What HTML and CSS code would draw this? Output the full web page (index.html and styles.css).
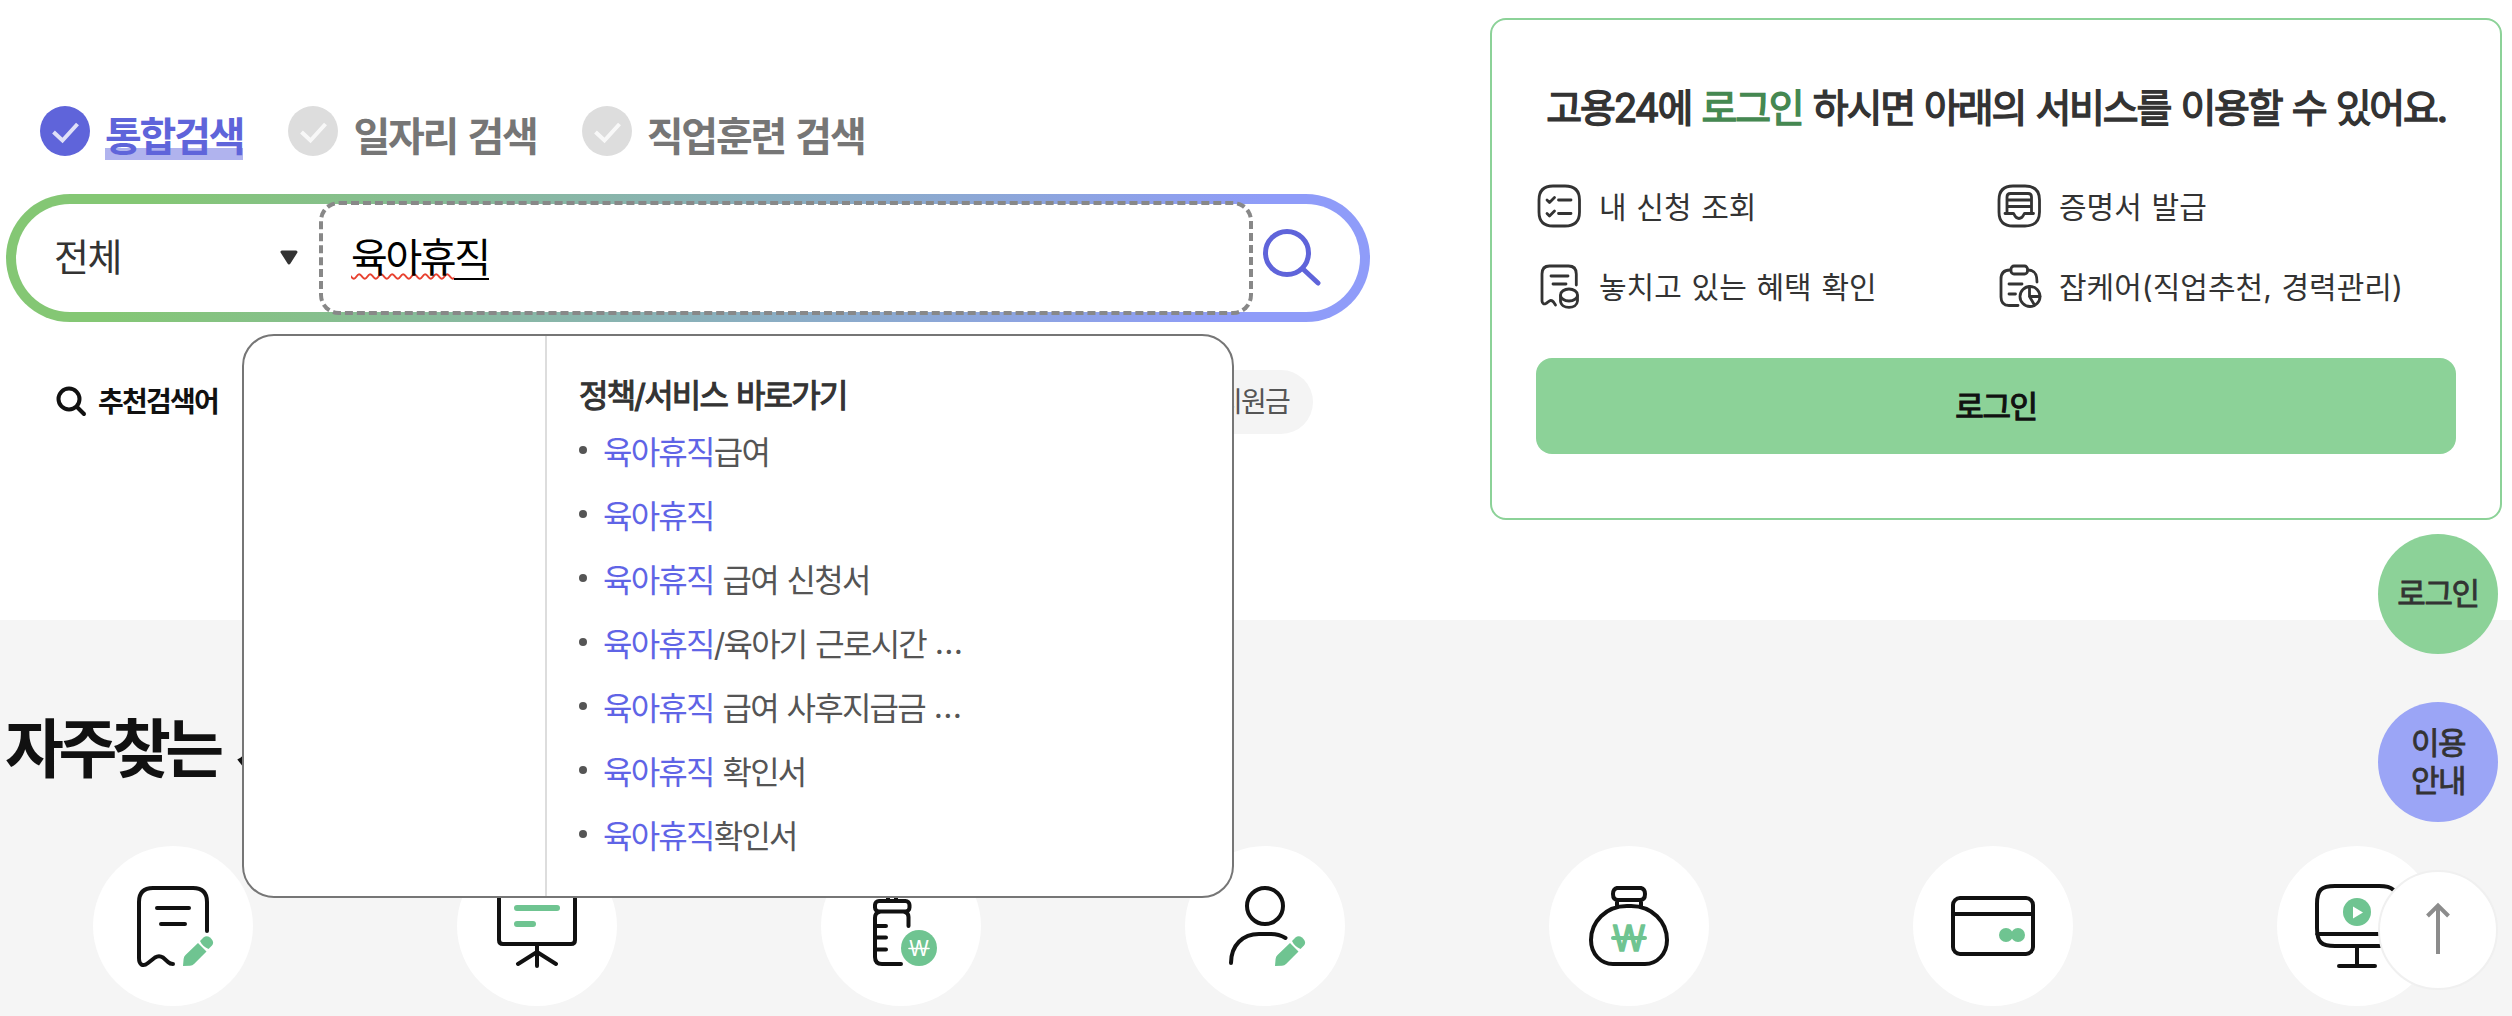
FILE: index.html
```
<!DOCTYPE html>
<html lang="ko">

<head>
    <meta charset="UTF-8">
    <meta name="viewport" content="width=device-width, initial-scale=1.0">
    <title>고용24</title>
    <link rel="stylesheet" href="styles.css">
</head>

<body>
    <!-- shared icon parts -->
    <svg class="defs" width="0" height="0">
        <symbol id="pencil" viewBox="0 0 160 160">
            <path d="M105 97L113.500 105.500L101 118Q99.500 119.600 97 119.700L90 120L90.600 113Q90.800 110.500 92.500 109Z" fill="#6fc491" />
            <path d="M107 95L110.500 91.500Q113.500 88.800 117 91.500L118.500 93Q121.500 96.500 119 99.500L115.500 103Q109.500 100.500 107 95Z" fill="#6fc491" />
        </symbol>
        <symbol id="check" viewBox="0 0 52 52">
            <circle cx="26" cy="26" r="25" fill="currentColor" />
            <path d="M14.500 27L23.500 35.500L38.500 19" fill="none" stroke="#fff" stroke-opacity=".8" stroke-width="4" />
        </symbol>
    </svg>

    <main>
        <section class="top">
            <div class="search">
                <ul class="tabs">
                    <li class="tab active"><svg class="tab-icon"><use href="#check" /></svg><span>통합검색</span></li>
                    <li class="tab"><svg class="tab-icon"><use href="#check" /></svg><span>일자리 검색</span></li>
                    <li class="tab"><svg class="tab-icon"><use href="#check" /></svg><span>직업훈련 검색</span></li>
                </ul>

                <div class="search-bar">
                    <div class="search-inner">
                        <div class="select">
                            <span>전체</span>
                            <svg width="20" height="16" viewBox="0 0 20 16"><path d="M3 2H17L10 13Z" fill="#333" stroke="#333" stroke-width="3" stroke-linejoin="round" /></svg>
                        </div>
                        <div class="input"><span class="typed">육아휴<span class="composing">직</span></span></div>
                        <svg class="search-btn" width="60" height="60" viewBox="0 0 60 60">
                            <g fill="none" stroke="#5f64da" stroke-width="5" stroke-linecap="round">
                                <circle cx="26" cy="25" r="21.500" />
                                <path d="M42 41L57 55" />
                            </g>
                        </svg>
                    </div>
                </div>

                <div class="recommend">
                    <svg width="32" height="32" viewBox="0 0 32 32">
                        <g fill="none" stroke="#111" stroke-width="4" stroke-linecap="round">
                            <circle cx="14" cy="13" r="10.500" />
                            <path d="M22 21L29 28" />
                        </g>
                    </svg>
                    <strong>추천검색어</strong>
                    <span class="chip">지원금</span>
                </div>

                <!-- autocomplete -->
                <div class="suggest">
                    <div class="suggest-left"></div>
                    <div class="suggest-right">
                        <h3>정책/서비스 바로가기</h3>
                        <ul>
                            <li><em>육아휴직</em>급여</li>
                            <li><em>육아휴직</em></li>
                            <li><em>육아휴직</em> 급여 신청서</li>
                            <li><em>육아휴직</em>/육아기 근로시간 <span class="dots">...</span></li>
                            <li><em>육아휴직</em> 급여 사후지급금 <span class="dots">...</span></li>
                            <li><em>육아휴직</em> 확인서</li>
                            <li><em>육아휴직</em>확인서</li>
                        </ul>
                    </div>
                </div>
            </div>

            <div class="login-card">
                <h2>고용24에 <b>로그인</b> 하시면 아래의 서비스를 이용할 수 있어요.</h2>
                <ul class="services">
                    <li>
                        <svg class="line-icon" viewBox="0 0 46 46">
                            <path d="M16 3H28Q42.500 3 42.500 17V29Q42.500 43 28 43H16Q2 43 2 29V17Q2 3 16 3Z" />
                            <path d="M21.500 17H34M21.500 30.500H34M10 17L12.500 19.500L17.500 14.500M10 30.500L12.500 33L17.500 28" />
                        </svg>
                        <span>내 신청 조회</span>
                    </li>
                    <li>
                        <svg class="line-icon" viewBox="0 0 46 46">
                            <path d="M16 3H28Q42.500 3 42.500 17V29Q42.500 43 28 43H16Q2 43 2 29V17Q2 3 16 3Z" />
                            <path d="M10 30V14Q10 10.500 13.500 10.500H31Q34.500 10.500 34.500 14V30M10 17H34M10 23.500H34M8 30.500H16.500C17.500 30.500 17.500 35.500 22 35.500S26.500 30.500 27.500 30.500H36.500" />
                        </svg>
                        <span>증명서 발급</span>
                    </li>
                    <li>
                        <svg class="line-icon" viewBox="0 0 46 46">
                            <path d="M39.300 22V11Q39.300 3 31.500 3H12.500Q5 3 5 11V38Q5.500 42 9 40.500C12 38 14 36 16.500 39L18.500 42M14 13H31M16 21H29" />
                            <ellipse cx="32" cy="32" rx="8.500" ry="6" />
                            <path d="M23.500 33V38C24 46.500 40 46.500 40.500 38V33" />
                        </svg>
                        <span>놓치고 있는 혜택 확인</span>
                    </li>
                    <li>
                        <svg class="line-icon" viewBox="0 0 46 46">
                            <path d="M13 7C6.500 7 4 10 4 16V34C4 40 7.500 42.500 12 42.500H21M31 7C37 7 40 10 40 19M12 21H25M12 31H18.500" />
                            <rect x="14" y="3" width="16.500" height="8" rx="3" />
                            <circle cx="33" cy="33.500" r="10" />
                            <path d="M32.500 23.500V33.500H43M32.500 33.500L37.500 42" />
                        </svg>
                        <span>잡케어(직업추천, 경력관리)</span>
                    </li>
                </ul>
                <button class="login-btn">로그인</button>
            </div>
        </section>

        <section class="frequent">
            <h2>자주찾는 서비스</h2>
            <ul class="quick">
                <li>
                    <svg viewBox="0 0 160 160">
                        <path class="line" d="M114 85V56Q114 42 100 42H60Q46 42 46 56V112C46 119 50 121 55 117L62 111.500Q66 109 70 111.500L75 116Q77 118 80 118M64 62H96M68 78H92" />
                        <use href="#pencil" />
                    </svg>
                </li>
                <li>
                    <svg viewBox="0 0 160 160">
                        <path class="line" d="M42 42H118V94Q118 98 114 98H46Q42 98 42 94ZM80 98V120M61 118L80 106L99 118" />
                        <path d="M60 62H100M60 78H76" fill="none" stroke="#6fc491" stroke-width="6" stroke-linecap="round" />
                    </svg>
                </li>
                <li>
                    <svg viewBox="0 0 160 160">
                        <rect class="line" x="54" y="55" width="34.500" height="10.500" rx="4" />
                        <path class="line" d="M67 44V53M75 44V53M87.500 80V71Q87.500 67 84 66M58 66Q54 67 54 72V111Q54 118 61 118H80M54 80H65M54 91.500H65M54 103.500H65" />
                        <circle cx="98" cy="102" r="18" fill="#6fc491" />
                        <text class="won won-small" x="98" y="110" textLength="20" lengthAdjust="spacingAndGlyphs">W</text>
                        <path d="M88 102.500H108" stroke="#fff" stroke-width="1.600" stroke-linecap="round" />
                    </svg>
                </li>
                <li>
                    <svg viewBox="0 0 160 160">
                        <circle class="line" cx="80" cy="60" r="18" />
                        <path class="line" d="M46 117C46 99 58 88 74 88H86Q94 88 100.500 92" />
                        <use href="#pencil" />
                    </svg>
                </li>
                <li>
                    <svg viewBox="0 0 160 160">
                        <path class="line" d="M68 42H92Q96 43 96 48Q96 54 91 54H69Q64 54 64 48Q64 43 68 42ZM68 55V60M92 55V60M80 60C104 59 118 77 118 94C118 108 108 118 96 118H64C52 118 42 108 42 94C42 77 56 59 80 60Z" />
                        <text class="won won-big" x="80" y="105" textLength="33" lengthAdjust="spacingAndGlyphs">W</text>
                        <path d="M64 92H96" stroke="#6fc491" stroke-width="4" stroke-linecap="round" />
                    </svg>
                </li>
                <li>
                    <svg viewBox="0 0 160 160">
                        <rect class="line" x="40" y="52" width="80" height="56" rx="7" />
                        <path class="line" d="M40 68H120" />
                        <g fill="#6fc491">
                            <circle cx="93" cy="89" r="7" />
                            <circle cx="105" cy="89" r="7" />
                        </g>
                    </svg>
                </li>
                <li>
                    <svg viewBox="0 0 160 160">
                        <path class="line" d="M58 40H102C116 40 120 44 120 58V82C120 96 116 100 102 100H58C44 100 40 96 40 82V58C40 44 44 40 58 40ZM40 88H120M80 100V120M62 120H98" />
                        <circle cx="80" cy="66" r="14" fill="#6fc491" />
                        <path d="M76 60.500L86 66.500L76 72.500Z" fill="#fff" />
                    </svg>
                </li>
            </ul>
        </section>
    </main>

    <aside class="floating">
        <a class="float-btn green">로그인</a>
        <a class="float-btn purple">이용<br>안내</a>
        <a class="float-btn up">
            <svg width="40" height="60" viewBox="0 0 40 60"><path d="M20 54V6M9.500 16L20 5.500L30.500 16" fill="none" stroke="#8c8c8c" stroke-width="4" /></svg>
        </a>
    </aside>
</body>

</html>
```
FILE: styles.css
```
* {
    box-sizing: border-box;
    margin: 0;
    padding: 0;
}

body {
    position: relative;
    height: 1016px;
    overflow: hidden;
    background: #fff;
    color: #333;
    font-family: "Inter", "Noto Sans CJK KR", sans-serif;
    font-size: 32px;
    letter-spacing: -0.055em;
    word-spacing: 1.5px;
}

ul {
    list-style: none;
}

.defs {
    position: absolute;
}

.top {
    display: flex;
    justify-content: space-between;
    height: 620px;
    padding: 18px 10px 0 6px;
}

/* search */
.search {
    position: relative;
    width: 1364px;
    padding-top: 87px;
}

.tabs {
    display: flex;
    gap: 44px;
    height: 89px;
    padding-left: 33px;
}

.tab {
    display: flex;
    align-items: flex-start;
    gap: 14px;
    color: #767676;
    font-size: 40px;
    font-weight: 700;
    line-height: 63px;
    letter-spacing: -2.2px;
    word-spacing: 3px;
}

.tab-icon {
    width: 52px;
    height: 52px;
    color: #ddd;
}

.tab span {
    height: 55px;
}

.active {
    color: #5f64da;
}

.active .tab-icon {
    color: #5f64da;
}

.active span {
    background: linear-gradient(#b0b3ee, #b0b3ee) 0 100% / 100% 12px no-repeat;
}

.search-bar {
    height: 128px;
    padding: 10px;
    border-radius: 64px;
    background: linear-gradient(110deg, #84c774 10%, #8f9cf9 90%);
}

.search-inner {
    display: flex;
    align-items: center;
    height: 108px;
    border-radius: 54px;
    background: #fff;
    font-size: 40px;
}

.select {
    display: flex;
    align-items: center;
    justify-content: space-between;
    width: 303px;
    padding: 0 20px 0 38px;
}

.select span {
    padding-bottom: 7px;
    font-size: 38px;
    letter-spacing: -1.5px;
}

/* focus ring sits over the bar */
.input {
    flex: none;
    width: 934px;
    height: 114px;
    padding-left: 28px;
    border: 4px dashed #888;
    border-radius: 20px;
    color: #000;
    line-height: 106px;
    letter-spacing: -2.4px;
}

.typed {
    text-decoration: underline wavy #e8412f 2px;
    text-decoration-skip-ink: none;
    text-underline-offset: 1px;
}

.composing {
    display: inline-block;
    height: 44px;
    border-bottom: 2px solid #000;
    line-height: 43px;
}

.search-btn {
    margin-left: 8px;
}

.recommend {
    display: flex;
    align-items: center;
    height: 64px;
    margin-top: 48px;
    padding: 0 57px 0 49px;
    font-size: 28px;
}

.recommend strong {
    margin-left: 11px;
    padding-bottom: 4px;
    color: #111;
    font-weight: 700;
}

.chip {
    margin-left: auto;
    padding: 0 24px;
    border-radius: 32px;
    background: #f4f4f4;
    color: #555;
    line-height: 64px;
}

.suggest {
    position: absolute;
    z-index: 2;
    top: 316px;
    left: 236px;
    display: flex;
    width: 992px;
    height: 564px;
    border: 2px solid #767676;
    border-radius: 32px;
    background: #fff;
}

.suggest-left {
    width: 303px;
    border-right: 2px solid #ddd;
}

.suggest-right {
    padding: 36px 32px;
}

.suggest h3 {
    font-size: 32px;
    font-weight: 400;
    line-height: 48px;
    -webkit-text-stroke: 1.1px;
}

.suggest li {
    display: flex;
    align-items: center;
    height: 64px;
    padding-bottom: 4px;
    color: #555;
    white-space: pre;
}

.suggest li::before {
    content: "";
    width: 8px;
    height: 8px;
    margin-right: 16px;
    border-radius: 50%;
    background: #555;
}

.suggest em {
    color: #5f64e6;
    font-style: normal;
}

.dots {
    letter-spacing: 0.3px;
}

/* login card */
.login-card {
    width: 1012px;
    height: 502px;
    padding: 60px 44px 0;
    border: 2px solid #8cd298;
    border-radius: 16px;
}

.login-card h2 {
    font-size: 39px;
    font-weight: 400;
    line-height: 56px;
    letter-spacing: -2.2px;
    text-align: center;
    white-space: nowrap;
    -webkit-text-stroke: 1.4px;
}

.login-card b {
    color: #458851;
    font-weight: 400;
}

.services {
    display: grid;
    grid-template-columns: 460px 460px;
    margin-top: 30px;
}

.services li {
    display: flex;
    align-items: center;
    gap: 16px;
    height: 80px;
    padding-left: 1px;
    font-size: 30px;
    letter-spacing: 0;
    word-spacing: 1.3px;
    white-space: nowrap;
}

.services span {
    padding-bottom: 3px;
}

.line-icon {
    width: 46px;
    height: 46px;
    fill: none;
    stroke: #333;
    stroke-width: 2.8;
    stroke-linecap: round;
    stroke-linejoin: round;
}

.login-btn {
    display: block;
    width: 920px;
    height: 96px;
    margin-top: 32px;
    padding-bottom: 4px;
    border: 0;
    border-radius: 16px;
    background: #8cd298;
    color: #111;
    font: 400 31px "Inter", "Noto Sans CJK KR", sans-serif;
    letter-spacing: -0.045em;
    -webkit-text-stroke: 1.2px;
}

/* frequent services */
.frequent {
    height: 396px;
    padding: 89px 0 0 5px;
    background: #f5f5f5;
}

.frequent h2 {
    color: #111;
    font-size: 64px;
    font-weight: 700;
    line-height: 80px;
    letter-spacing: -0.085em;
    word-spacing: 7px;
}

.quick {
    display: flex;
    gap: 204px;
    margin-top: 57px;
    padding-left: 88px;
}

.quick li {
    flex: none;
    width: 160px;
    height: 160px;
    border-radius: 50%;
    background: #fff;
}

.line {
    fill: none;
    stroke: #111;
    stroke-width: 4;
    stroke-linecap: round;
    stroke-linejoin: round;
}

.won {
    font-family: Inter, sans-serif;
    letter-spacing: 0;
    text-anchor: middle;
    stroke-linejoin: round;
}

.won-small {
    fill: #fff;
    font-size: 21px;
}

.won-big {
    fill: #6fc491;
    stroke: #6fc491;
    stroke-width: 1.5px;
    font-size: 35px;
}

/* floating buttons */
.floating {
    position: absolute;
    z-index: 3;
    top: 534px;
    right: 14px;
    display: flex;
    flex-direction: column;
    gap: 48px;
}

.float-btn {
    display: flex;
    align-items: center;
    justify-content: center;
    width: 120px;
    height: 120px;
    border-radius: 50%;
    font-size: 31px;
    line-height: 38px;
    letter-spacing: -0.045em;
    text-align: center;
    -webkit-text-stroke: 0.8px;
}

.green {
    background: #8cd298;
}

.purple {
    background: #9ba5f6;
}

.up {
    border: 2px solid #f0f0f0;
    background: #fff;
}
```
